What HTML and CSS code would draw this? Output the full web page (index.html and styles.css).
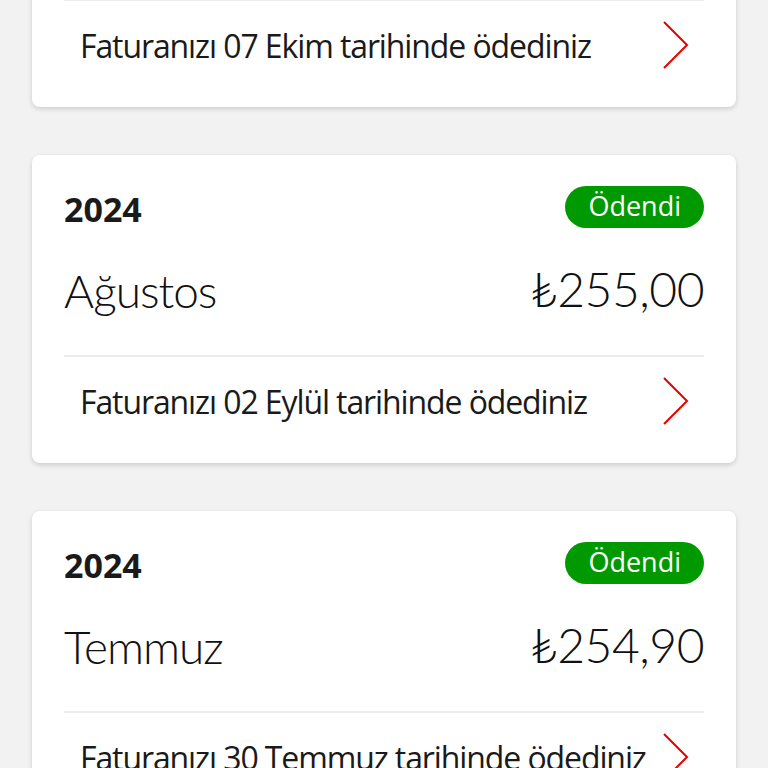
FILE: index.html
```html
<!DOCTYPE html>
<html lang="tr">
<head>
<meta charset="utf-8">
<link rel="stylesheet" href="styles.css">
</head>
<body>
<div class="bills">
    <div class="bill">
        <div class="bill-head">
            <span class="year">2024</span>
            <span class="status">Ödendi</span>
        </div>
        <div class="bill-main">
            <span class="month">Eylül</span>
            <span class="amount">₺255,00</span>
        </div>
        <div class="bill-foot">
            <span>Faturanızı 07 Ekim tarihinde ödediniz</span>
            <svg class="chevron" width="26" height="48" viewBox="0 0 26 48"><polyline points="1,1 24,24 1,47"/></svg>
        </div>
    </div>

    <div class="bill">
        <div class="bill-head">
            <span class="year">2024</span>
            <span class="status">Ödendi</span>
        </div>
        <div class="bill-main">
            <span class="month">Ağustos</span>
            <span class="amount">₺255,00</span>
        </div>
        <div class="bill-foot">
            <span>Faturanızı 02 Eylül tarihinde ödediniz</span>
            <svg class="chevron" width="26" height="48" viewBox="0 0 26 48"><polyline points="1,1 24,24 1,47"/></svg>
        </div>
    </div>

    <div class="bill">
        <div class="bill-head">
            <span class="year">2024</span>
            <span class="status">Ödendi</span>
        </div>
        <div class="bill-main">
            <span class="month">Temmuz</span>
            <span class="amount">₺254,90</span>
        </div>
        <div class="bill-foot">
            <span>Faturanızı 30 Temmuz tarihinde ödediniz</span>
            <svg class="chevron" width="26" height="48" viewBox="0 0 26 48"><polyline points="1,1 24,24 1,47"/></svg>
        </div>
    </div>
</div>
</body>
</html>
```
FILE: styles.css
```css
* {
    box-sizing: border-box;
}
body {
    margin: 0;
    background-color: #f2f2f2;
    font-family: "Open Sans", sans-serif;
    color: #1a1a1a;
}
.bills {
    display: flex;
    flex-direction: column;
    gap: 48px;
    padding: 0 32px;
    margin-top: -201px;
}
.bill {
    height: 308px;
    background-color: #fff;
    border-radius: 8px;
    box-shadow: 0 2px 5px rgba(0, 0, 0, 0.16);
    padding: 31px 32px 0;
    display: flex;
    flex-direction: column;
}
.bill-head {
    display: flex;
    justify-content: space-between;
    align-items: center;
    height: 42px;
}
.year {
    font-weight: 700;
    font-size: 34px;
    line-height: 1;
    margin-top: 4px;
}
.status {
    background-color: #009a00;
    color: #fff;
    font-size: 27px;
    font-weight: 380;
    line-height: 40px;
    height: 42px;
    padding: 0 23px;
    border-radius: 21px;
}
.bill-main {
    display: flex;
    justify-content: space-between;
    align-items: center;
    height: 129px;
    border-bottom: 2px solid #ebebeb;
    font-family: Lato, sans-serif;
    font-weight: 300;
    color: #111;
    padding-bottom: 2px;
}
.month {
    font-size: 46px;
    letter-spacing: -1px;
}
.amount {
    font-size: 48px;
    letter-spacing: -0.5px;
    margin-top: -4px;
}
.bill-foot {
    display: flex;
    justify-content: space-between;
    align-items: center;
    height: 88px;
    padding: 0 15px 0 16px;
    font-size: 32px;
    font-weight: 370;
    letter-spacing: -1.1px;
    white-space: nowrap;
}
.chevron polyline {
    fill: none;
    stroke: #e60000;
    stroke-width: 2;
}
```
